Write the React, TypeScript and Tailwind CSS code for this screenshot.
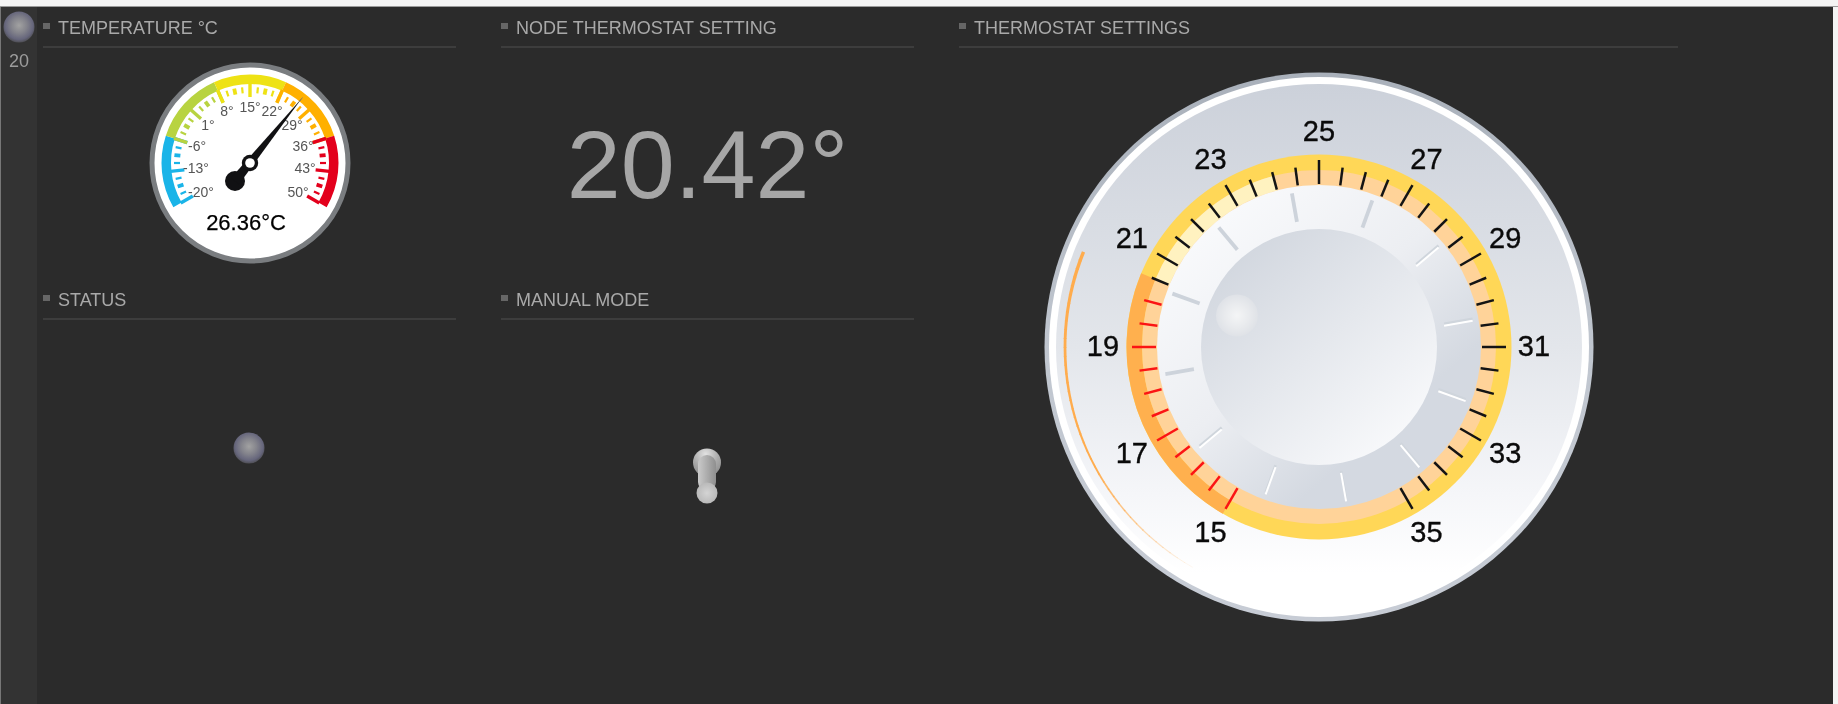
import React from "react";

const CX = 275, CY = 275;
const rad = (a: number) => ((a - 90) * Math.PI) / 180;
const pt = (r: number, a: number, cx = CX, cy = CY) => ({ x: cx + r * Math.cos(rad(a)), y: cy + r * Math.sin(rad(a)) });
const arc = (r1: number, r2: number, a1: number, a2: number, cx = CX, cy = CY) => {
  const p1 = pt(r2, a1, cx, cy), p2 = pt(r2, a2, cx, cy), p3 = pt(r1, a2, cx, cy), p4 = pt(r1, a1, cx, cy);
  const large = a2 - a1 > 180 ? 1 : 0;
  return `M${p1.x} ${p1.y}A${r2} ${r2} 0 ${large} 1 ${p2.x} ${p2.y}L${p3.x} ${p3.y}A${r1} ${r1} 0 ${large} 0 ${p4.x} ${p4.y}Z`;
};
const FONT = { fontFamily: '"Liberation Sans", Arial, sans-serif' };

function Title({ children }: { children: React.ReactNode }) {
  return (
    <div className="flex h-[41px] items-center border-b-2 border-[#3d3d3d] pt-[3px] text-[18px] leading-none text-[#a9a9a9]">
      <span className="mr-[8px] mb-[4px] h-[6px] w-[7px] bg-[#666666]" />
      <span>{children}</span>
    </div>
  );
}

function Led({ id, size }: { id: string; size: number }) {
  return (
    <svg width={size} height={size} viewBox="0 0 32 32" className="block">
      <defs>
        <radialGradient id={id} cx="0.5" cy="0.45" r="0.55">
          <stop offset="0" stopColor="#a2a2a2" />
          <stop offset="0.45" stopColor="#84848c" />
          <stop offset="0.82" stopColor="#66667c" />
          <stop offset="1" stopColor="#4f4f55" />
        </radialGradient>
      </defs>
      <circle cx="16" cy="16" r="15.5" fill={`url(#${id})`} />
    </svg>
  );
}

function Toggle() {
  return (
    <svg width="30" height="56" viewBox="0 0 30 56" className="block">
      <defs>
        <radialGradient id="tgHead" cx="0.45" cy="0.2" r="0.8">
          <stop offset="0" stopColor="#e2e2e2" />
          <stop offset="0.6" stopColor="#a8a8a8" />
          <stop offset="1" stopColor="#8e8e8e" />
        </radialGradient>
        <linearGradient id="tgStem" x1="0" x2="1" y1="0" y2="0">
          <stop offset="0" stopColor="#cacaca" />
          <stop offset="1" stopColor="#8f8f8f" />
        </linearGradient>
        <radialGradient id="tgKnob" cx="0.5" cy="0.5" r="0.6">
          <stop offset="0" stopColor="#d4d4d4" />
          <stop offset="1" stopColor="#b4b4b4" />
        </radialGradient>
      </defs>
      <circle cx="15" cy="14.5" r="14" fill="url(#tgHead)" />
      <rect x="6" y="7" width="18" height="36" rx="9" fill="url(#tgStem)" />
      <circle cx="15" cy="45" r="10.5" fill="url(#tgKnob)" />
    </svg>
  );
}

function Gauge() {
  const c = 101;
  const zones: [number, number, string][] = [
    [-120, -72, "#1ab4e8"],
    [-72, -24, "#b8d340"],
    [-24, 24, "#eee214"],
    [24, 72, "#ffb000"],
    [72, 120, "#e3001c"],
  ];
  const ticks: React.ReactNode[] = [];
  zones.forEach(([a1, , col], zi) => {
    for (let i = 0; i <= 8; i++) {
      const a = a1 + i * 6;
      const major = i % 4 === 0;
      const mid = i % 4 === 2;
      const p1 = pt(major ? 80 : 76, a, c, c);
      const p2 = pt(major ? 66 : 70, a, c, c);
      ticks.push(<line key={`${zi}-${i}`} x1={p1.x} y1={p1.y} x2={p2.x} y2={p2.y} stroke={col} strokeWidth={major ? 3.4 : mid ? 3.8 : 2.2} />);
    }
  });
  const labels: [string, number, number][] = [
    ["-20°", 52, 130], ["-13°", 47, 106], ["-6°", 48, 84], ["1°", 59, 63], ["8°", 78, 49], ["15°", 101, 45],
    ["22°", 123, 49], ["29°", 143, 63], ["36°", 154, 84], ["43°", 156, 106], ["50°", 149, 130],
  ];
  return (
    <svg width="202" height="202" viewBox="0 0 202 202" className="block">
      <circle cx={c} cy={c} r="98" fill="#ffffff" stroke="#7a7d80" strokeWidth="5" />
      {zones.map(([a1, a2, col]) => <path key={col} d={arc(79, 88.5, a1, a2, c, c)} fill={col} />)}
      {ticks}
      {labels.map(([t, x, y]) => (
        <text key={t} x={x} y={y + 5} textAnchor="middle" fontSize="14" fill="#555555" style={FONT}>{t}</text>
      ))}
      <text x="97" y="168" textAnchor="middle" fontSize="22" fill="#000000" stroke="#000000" strokeWidth="0.25" style={FONT}>26.36°C</text>
      <circle cx="86" cy="119" r="10" fill="#111113" />
      <polygon points="82,116 90,122.2 153,36" fill="#111113" />
      <line x1="150.5" y1="39.5" x2="153.5" y2="35.5" stroke="#777777" strokeWidth="0.8" />
      <circle cx={c} cy={c} r="8.2" fill="#111113" />
      <circle cx={c} cy={c} r="4.8" fill="#ffffff" />
    </svg>
  );
}

function Thermostat() {
  const ticks: React.ReactNode[] = [];
  for (let i = 0; i <= 40; i++) {
    const a = -150 + i * 7.5;
    const major = i % 4 === 0;
    const p1 = pt(major ? 187 : 181, a), p2 = pt(163, a);
    ticks.push(<line key={i} x1={p1.x} y1={p1.y} x2={p2.x} y2={p2.y} stroke={i <= 10 ? "#fb1414" : "#141414"} strokeWidth="2.5" />);
  }
  const marks: React.ReactNode[] = [];
  const markAngles = [-160, -130, -100, -70, -40, -10, 20, 50, 80, 110, 140, 170];
  markAngles.forEach((a) => {
    const p1 = pt(156, a), p2 = pt(127, a);
    const solid = a === -10 || a === -40 || a === -70 || a === -100 || a === 20;
    marks.push(
      solid ? (
        <line key={a} x1={p1.x} y1={p1.y} x2={p2.x} y2={p2.y} stroke="#cdd3db" strokeWidth="3.8" />
      ) : (
        <g key={a}>
          <line x1={p1.x} y1={p1.y - 1.2} x2={p2.x} y2={p2.y - 1.2} stroke="#cfd5dc" strokeWidth="2.6" />
          <line x1={p1.x} y1={p1.y + 0.8} x2={p2.x} y2={p2.y + 0.8} stroke="#ffffff" strokeWidth="2" />
        </g>
      )
    );
  });
  const crescent: React.ReactNode[] = [];
  for (let i = 0; i < 41; i++) {
    const a = -68 - i * 2;
    const t = i / 41;
    const p1 = pt(254, a), p2 = pt(254, a - 2.2);
    crescent.push(
      <line key={i} x1={p1.x} y1={p1.y} x2={p2.x} y2={p2.y} stroke="#ffac4d" strokeWidth={3.4 * (1 - t * 0.75)} strokeOpacity={t < 0.6 ? 1 : 1 - (t - 0.6) * 2.4} />
    );
  }
  const labels: [string, number][] = [
    ["15", -150], ["17", -120], ["19", -90], ["21", -60], ["23", -30], ["25", 0],
    ["27", 30], ["29", 60], ["31", 90], ["33", 120], ["35", 150],
  ];
  return (
    <svg width="550" height="550" viewBox="0 0 550 550" className="block">
      <defs>
        <linearGradient id="face" x1="0" x2="0" y1="0" y2="1">
          <stop offset="0" stopColor="#ccd1da" />
          <stop offset="0.5" stopColor="#e3e6eb" />
          <stop offset="0.78" stopColor="#f5f6f9" />
          <stop offset="0.93" stopColor="#ffffff" />
        </linearGradient>
        <linearGradient id="rim" x1="0" x2="0" y1="0" y2="1">
          <stop offset="0" stopColor="#a9b0ba" />
          <stop offset="0.5" stopColor="#c0c6cf" />
          <stop offset="1" stopColor="#c7ccd5" />
        </linearGradient>
        <linearGradient id="dial" x1="0.15" x2="0.85" y1="0.1" y2="0.9">
          <stop offset="0" stopColor="#f9fafc" />
          <stop offset="0.45" stopColor="#eceef2" />
          <stop offset="0.8" stopColor="#d4d9e1" />
        </linearGradient>
        <linearGradient id="knob" x1="0.15" x2="0.85" y1="0.1" y2="0.9">
          <stop offset="0" stopColor="#d2d7df" />
          <stop offset="1" stopColor="#f8f9fb" />
        </linearGradient>
        <radialGradient id="dot">
          <stop offset="0" stopColor="#f4f5f6" />
          <stop offset="0.6" stopColor="#e8eaed" />
          <stop offset="1" stopColor="#dfe2e7" />
        </radialGradient>
      </defs>
      <circle cx={CX} cy={CY} r="274.5" fill="url(#rim)" />
      <circle cx={CX} cy={CY} r="270" fill="#ffffff" />
      <circle cx={CX} cy={CY} r="263" fill="url(#face)" />
      {crescent}
      <circle cx={CX} cy={CY} r="192.5" fill="#ffd757" />
      <path d={arc(177, 192.5, -150, -67.5)} fill="#ffb04e" />
      <circle cx={CX} cy={CY} r="177" fill="#ffd399" />
      <path d={arc(162, 177, -67.5, -15)} fill="#fff2c0" />
      <circle cx={CX} cy={CY} r="162" fill="url(#dial)" />
      {ticks}
      {marks}
      <circle cx={CX} cy={CY} r="118" fill="url(#knob)" />
      <circle cx={CX - 82} cy={CY - 31.5} r="21" fill="url(#dot)" />
      {labels.map(([t, a]) => {
        const p = pt(215, a);
        return (
          <text key={t} x={p.x - (a < 0 ? 1 : 0)} y={p.y + 8.5} textAnchor="middle" fontSize="29" fill="#0a0a0a" stroke="#0a0a0a" strokeWidth="0.35" style={FONT}>{t}</text>
        );
      })}
    </svg>
  );
}

export default function App() {
  return (
    <div className="flex h-[704px] w-[1838px] flex-col overflow-hidden bg-[#2b2b2b] font-['Liberation_Sans',Arial,sans-serif] blur-[0.5px]">
      <div className="h-[7px] shrink-0 border-b border-[#9a9a9a] bg-[#f4f4f4]" />
      <div className="flex min-h-0 flex-1 border-l border-[#777777] border-r-[5px] border-r-[#f4f4f4]">
        <aside className="flex w-[36px] shrink-0 flex-col items-center bg-[#333333] pt-[4px]">
          <Led id="navLed" size={32} />
          <span className="mt-[9px] text-[18px] leading-none text-[#9c9c9c]">20</span>
        </aside>
        <main className="flex flex-1 gap-[45px] pl-[6px]">
          <div className="grid grid-cols-[413px_413px] grid-rows-[272px_1fr] gap-x-[45px]">
            <section>
              <Title>TEMPERATURE °C</Title>
              <div className="flex justify-center pt-[14px]">
                <Gauge />
              </div>
            </section>
            <section>
              <Title>NODE THERMOSTAT SETTING</Title>
              <div className="flex h-[230px] justify-center pt-[62px] text-[97px] leading-[110px] text-[#a6a6a6]">20.42°</div>
            </section>
            <section>
              <Title>STATUS</Title>
              <div className="flex justify-center pr-[2px] pt-[112px]">
                <Led id="statusLed" size={32} />
              </div>
            </section>
            <section>
              <Title>MANUAL MODE</Title>
              <div className="flex justify-start pl-[191px] pt-[128px]">
                <Toggle />
              </div>
            </section>
          </div>
          <section className="w-[719px]">
            <Title>THERMOSTAT SETTINGS</Title>
            <div className="flex justify-center pt-[24px]">
              <Thermostat />
            </div>
          </section>
        </main>
      </div>
    </div>
  );
}
